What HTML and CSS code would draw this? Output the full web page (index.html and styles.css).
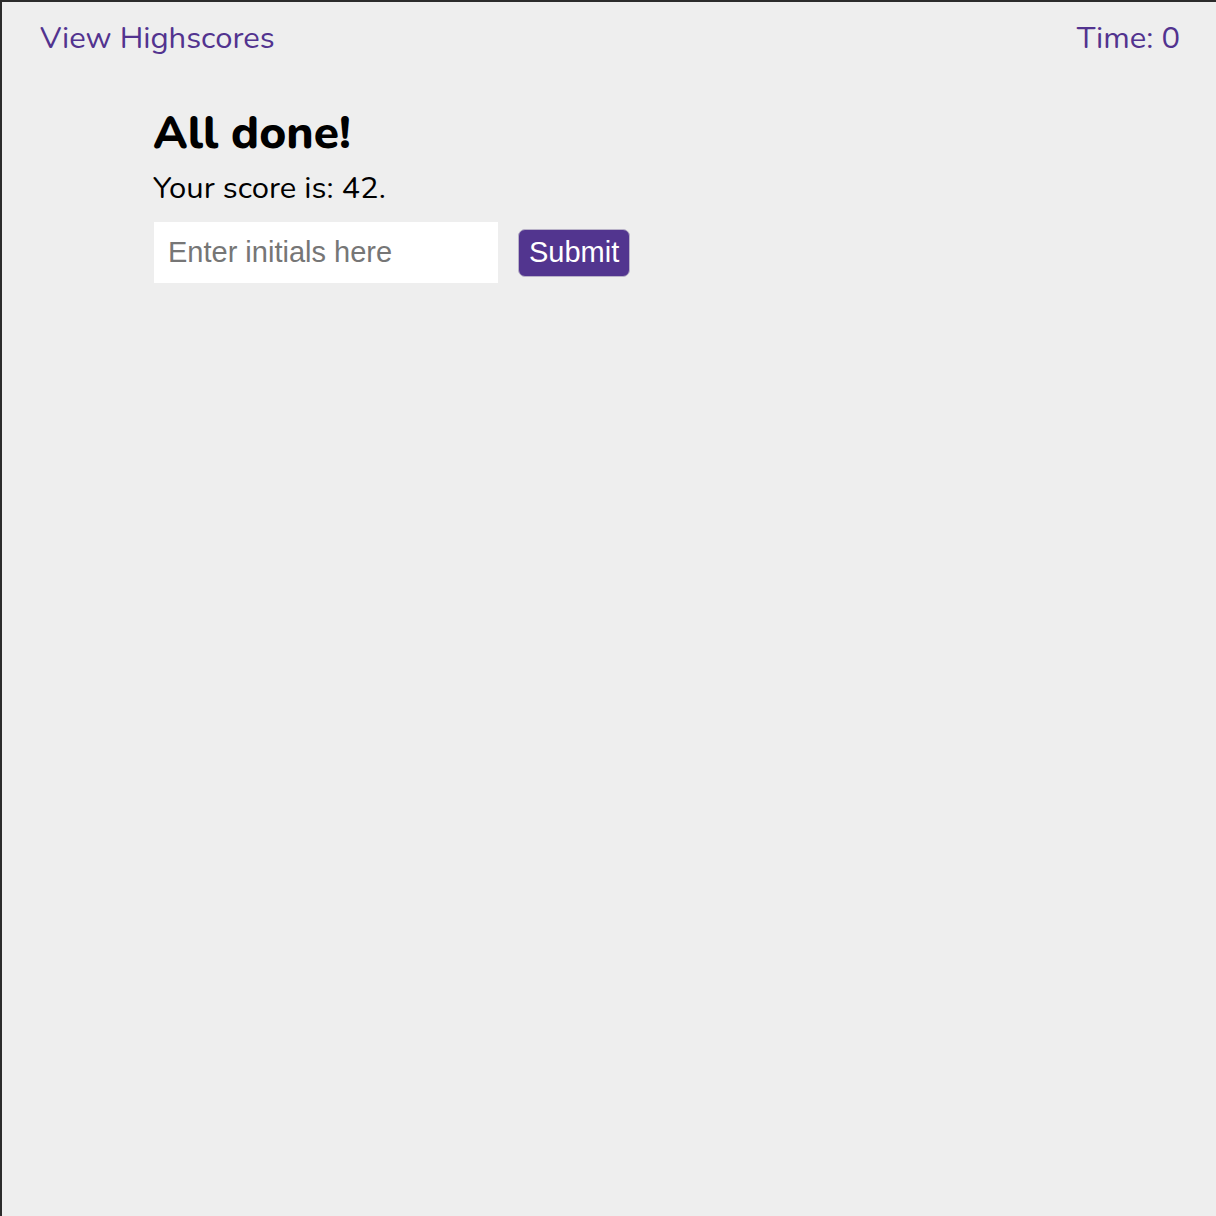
FILE: index.html
```html
<!DOCTYPE html>
<html>
<head>
<meta charset="utf-8">
<link rel="stylesheet" href="styles.css">
</head>
<body>
<div class="frame">
  <header class="topbar">
    <a class="link">View Highscores</a>
    <span class="timer">Time: 0</span>
  </header>
  <main class="content">
    <h1 class="title">All done!</h1>
    <p class="score">Your score is: 42.</p>
    <form class="form">
      <input class="initials" type="text" placeholder="Enter initials here">
      <button class="submit" type="button">Submit</button>
    </form>
  </main>
</div>
</body>
</html>
```
FILE: styles.css
```css
html, body {
  margin: 0;
  padding: 0;
  height: 100%;
}
body {
  background: #eeeeee;
  font-family: "Nunito", "Lato", "Noto Sans", sans-serif;
  color: #000;
}
.frame {
  box-sizing: border-box;
  height: 1216px;
  border-top: 2px solid #2b2b2b;
  border-left: 2px solid #2b2b2b;
}
.topbar {
  display: flex;
  justify-content: space-between;
  align-items: center;
  padding: 18px 36px 0 38px;
  font-size: 31px;
  color: #52338f;
  line-height: 36px;
}
.link { color: #52338f; }
.timer { color: #52338f; }
.content {
  padding: 49px 0 0 151px;
}
.title {
  margin: 0;
  font-size: 46px;
  font-weight: 800;
  line-height: 56px;
}
.score {
  margin: 9px 0 0;
  font-size: 31px;
  line-height: 36px;
}
.form {
  display: flex;
  align-items: center;
  gap: 20px;
  margin-top: 16px;
}
.initials {
  box-sizing: border-box;
  width: 344px;
  height: 61px;
  border: none;
  background: #fff;
  padding: 0 14px;
  font-family: "Liberation Sans", Arial, sans-serif;
  font-size: 29px;
  outline: none;
  margin-left: 1px;
}
.initials::placeholder {
  color: #767676;
}
.submit {
  box-sizing: border-box;
  height: 48px;
  padding: 0 10px;
  background: #52358f;
  color: #fff;
  border: 1px solid #b9b2c8;
  border-radius: 7px;
  font-family: "Liberation Sans", Arial, sans-serif;
  font-size: 29px;
  line-height: 1;
}
```
